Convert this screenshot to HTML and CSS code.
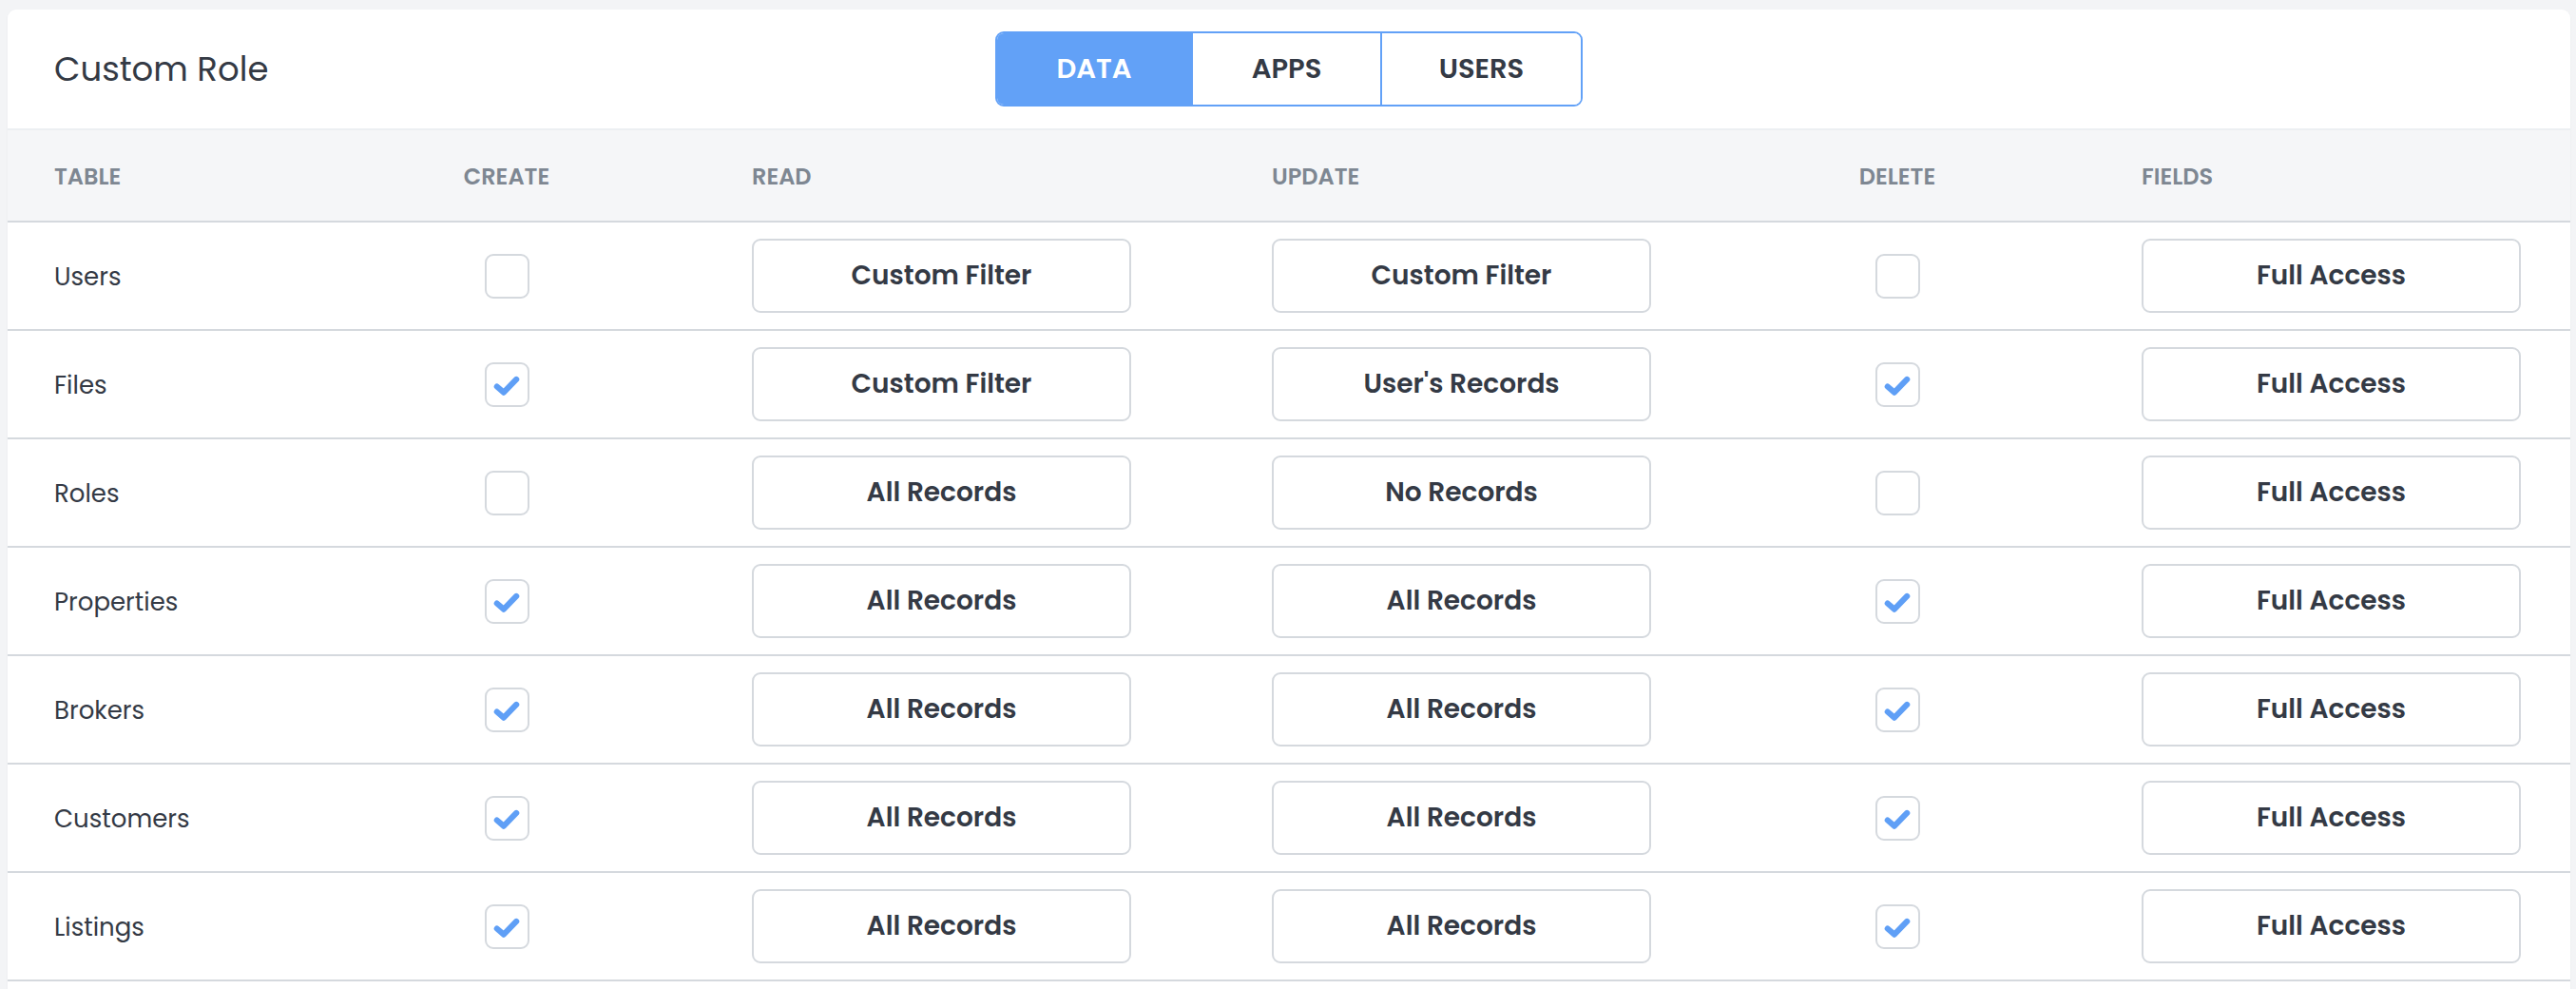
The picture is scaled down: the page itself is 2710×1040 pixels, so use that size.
FILE: index.html
```html
<!DOCTYPE html>
<html lang="en">
<head>
<meta charset="utf-8">
<title>Custom Role</title>
<link rel="stylesheet" href="styles.css">
</head>
<body>
<div class="card">
  <div class="card-header">
    <h1 class="title">Custom Role</h1>
    <div class="tabs">
      <div class="tab tab-active">DATA</div>
      <div class="tab tab-mid">APPS</div>
      <div class="tab tab-last">USERS</div>
    </div>
    <div></div>
  </div>

  <div class="grid-row thead">
    <div class="th">Table</div>
    <div class="th th-center">Create</div>
    <div class="th">Read</div>
    <div class="th">Update</div>
    <div class="th th-center">Delete</div>
    <div class="th">Fields</div>
  </div>

  <div class="grid-row trow">
    <div class="td-label">Users</div>
    <div class="td-center"><span class="checkbox"></span></div>
    <div class="td"><button class="sel">Custom Filter</button></div>
    <div class="td"><button class="sel">Custom Filter</button></div>
    <div class="td-center"><span class="checkbox"></span></div>
    <div class="td"><button class="sel">Full Access</button></div>
  </div>

  <div class="grid-row trow">
    <div class="td-label">Files</div>
    <div class="td-center"><span class="checkbox"><svg class="check" viewBox="0 0 46 46"><polyline points="12.5,25 19.5,31 32.5,17.5"/></svg></span></div>
    <div class="td"><button class="sel">Custom Filter</button></div>
    <div class="td"><button class="sel">User's Records</button></div>
    <div class="td-center"><span class="checkbox"><svg class="check" viewBox="0 0 46 46"><polyline points="12.5,25 19.5,31 32.5,17.5"/></svg></span></div>
    <div class="td"><button class="sel">Full Access</button></div>
  </div>

  <div class="grid-row trow">
    <div class="td-label">Roles</div>
    <div class="td-center"><span class="checkbox"></span></div>
    <div class="td"><button class="sel">All Records</button></div>
    <div class="td"><button class="sel">No Records</button></div>
    <div class="td-center"><span class="checkbox"></span></div>
    <div class="td"><button class="sel">Full Access</button></div>
  </div>

  <div class="grid-row trow">
    <div class="td-label">Properties</div>
    <div class="td-center"><span class="checkbox"><svg class="check" viewBox="0 0 46 46"><polyline points="12.5,25 19.5,31 32.5,17.5"/></svg></span></div>
    <div class="td"><button class="sel">All Records</button></div>
    <div class="td"><button class="sel">All Records</button></div>
    <div class="td-center"><span class="checkbox"><svg class="check" viewBox="0 0 46 46"><polyline points="12.5,25 19.5,31 32.5,17.5"/></svg></span></div>
    <div class="td"><button class="sel">Full Access</button></div>
  </div>

  <div class="grid-row trow">
    <div class="td-label">Brokers</div>
    <div class="td-center"><span class="checkbox"><svg class="check" viewBox="0 0 46 46"><polyline points="12.5,25 19.5,31 32.5,17.5"/></svg></span></div>
    <div class="td"><button class="sel">All Records</button></div>
    <div class="td"><button class="sel">All Records</button></div>
    <div class="td-center"><span class="checkbox"><svg class="check" viewBox="0 0 46 46"><polyline points="12.5,25 19.5,31 32.5,17.5"/></svg></span></div>
    <div class="td"><button class="sel">Full Access</button></div>
  </div>

  <div class="grid-row trow">
    <div class="td-label">Customers</div>
    <div class="td-center"><span class="checkbox"><svg class="check" viewBox="0 0 46 46"><polyline points="12.5,25 19.5,31 32.5,17.5"/></svg></span></div>
    <div class="td"><button class="sel">All Records</button></div>
    <div class="td"><button class="sel">All Records</button></div>
    <div class="td-center"><span class="checkbox"><svg class="check" viewBox="0 0 46 46"><polyline points="12.5,25 19.5,31 32.5,17.5"/></svg></span></div>
    <div class="td"><button class="sel">Full Access</button></div>
  </div>

  <div class="grid-row trow">
    <div class="td-label">Listings</div>
    <div class="td-center"><span class="checkbox"><svg class="check" viewBox="0 0 46 46"><polyline points="12.5,25 19.5,31 32.5,17.5"/></svg></span></div>
    <div class="td"><button class="sel">All Records</button></div>
    <div class="td"><button class="sel">All Records</button></div>
    <div class="td-center"><span class="checkbox"><svg class="check" viewBox="0 0 46 46"><polyline points="12.5,25 19.5,31 32.5,17.5"/></svg></span></div>
    <div class="td"><button class="sel">Full Access</button></div>
  </div>
</div>
</body>
</html>
```

FILE: styles.css
```css
* {
  box-sizing: border-box;
}

html, body {
  margin: 0;
  padding: 0;
}

body {
  background: #f3f4f6;
  padding: 10px 6px 0 8px;
  font-family: "Poppins", "Inter", "Noto Sans", sans-serif;
  color: #343a45;
}

.card {
  background: #ffffff;
  border-radius: 9px 9px 0 0;
  min-height: 1100px;
  box-shadow: 0 1px 3px rgba(0, 0, 0, 0.04);
}

.card-header {
  display: grid;
  grid-template-columns: 1fr auto 1fr;
  align-items: center;
  height: 127px;
  padding: 0 49px;
  border-bottom: 2px solid #eceff2;
}

.title {
  margin: 0;
  font-size: 35.5px;
  font-weight: 400;
  color: #343a45;
}

.tabs {
  display: flex;
  height: 79px;
  border: 2px solid #62a1f7;
  border-radius: 9px;
  overflow: hidden;
}

.tab {
  display: flex;
  align-items: center;
  justify-content: center;
  font-size: 29px;
  font-weight: 600;
  color: #343a45;
  background: #ffffff;
  border-right: 2px solid #62a1f7;
}

.tab-active {
  background: #62a1f7;
  color: #ffffff;
  width: 206px;
}

.tab-mid {
  width: 199px;
}

.tab-last {
  border-right: none;
  width: 209px;
}

.grid-row {
  display: grid;
  grid-template-columns: 316px 418px 547px 499px 416px 1fr;
  align-items: center;
}

.thead {
  height: 97px;
  padding-top: 2px;
  background: #f5f6f8;
  border-bottom: 2px solid #d5d9de;
}

.th {
  padding-left: 49px;
  font-size: 24px;
  font-weight: 600;
  text-transform: uppercase;
  color: #7e8792;
}

.th-center {
  padding-left: 0;
  text-align: center;
}

.trow {
  height: 114px;
  border-bottom: 2px solid #d5d9de;
}

.td-label {
  padding-left: 49px;
  padding-top: 2px;
  font-size: 26px;
  font-weight: 400;
  color: #343a45;
}

.td {
  padding-left: 49px;
  display: flex;
  align-items: center;
}

.td-center {
  display: flex;
  justify-content: center;
  align-items: center;
}

.checkbox {
  display: block;
  width: 47px;
  height: 47px;
  border: 2px solid #d5d9de;
  border-radius: 9px;
  background: #ffffff;
  position: relative;
}

.check {
  position: absolute;
  left: -2px;
  top: -2px;
  width: 47px;
  height: 47px;
}

.check polyline {
  fill: none;
  stroke: #5f9ff6;
  stroke-width: 6;
  stroke-linecap: round;
  stroke-linejoin: round;
}

.sel {
  width: 399px;
  height: 78px;
  border: 2px solid #d5d9de;
  border-radius: 9px;
  background: #ffffff;
  font-family: inherit;
  font-size: 28px;
  font-weight: 600;
  color: #343a45;
  padding: 0;
  cursor: pointer;
}
```
